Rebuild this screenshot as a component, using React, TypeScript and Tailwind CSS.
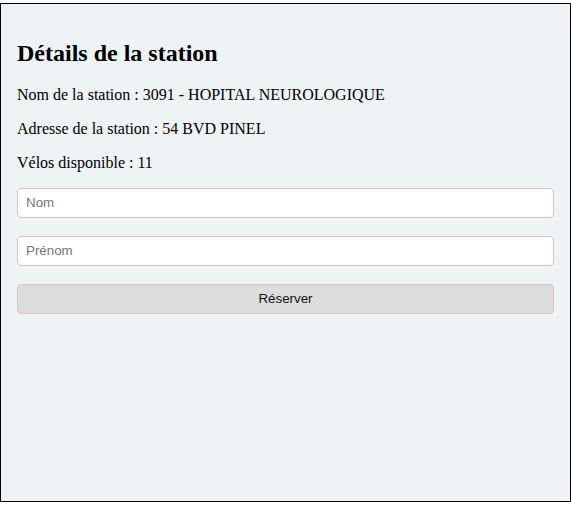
export default function App() {
  return (
    <div className="pt-[3px] bg-white">
      <div
        className="h-[499px] border border-black bg-[#eff3f4] px-4 pt-[36px]"
        style={{ fontFamily: '"Liberation Serif", "Times New Roman", serif' }}
      >
        <h2 className="text-[24px] font-bold leading-[27.6px] text-black mb-[18px]">
          Détails de la station
        </h2>
        <p className="text-[16px] leading-[18.4px] text-black mb-4">
          Nom de la station : 3091 - HOPITAL NEUROLOGIQUE
        </p>
        <p className="text-[16px] leading-[18.4px] text-black mb-4">
          Adresse de la station : 54 BVD PINEL
        </p>
        <p className="text-[16px] leading-[18.4px] text-black mb-[15px]">
          Vélos disponible : 11
        </p>
        <form
          className="flex flex-col gap-[18px]"
          style={{ fontFamily: '"Liberation Sans", Arial, sans-serif' }}
          onSubmit={(e) => e.preventDefault()}
        >
          <input
            type="text"
            placeholder="Nom"
            className="h-[30px] w-full rounded-[4px] border border-[#d8c6c6] bg-white px-2 text-[13.33px] text-black placeholder:text-[#767676] outline-none"
          />
          <input
            type="text"
            placeholder="Prénom"
            className="h-[30px] w-full rounded-[4px] border border-[#d8c6c6] bg-white px-2 text-[13.33px] text-black placeholder:text-[#767676] outline-none"
          />
          <button
            type="submit"
            className="h-[30px] w-full rounded-[4px] border border-[#d8c6c6] bg-[#dddddd] text-[13.33px] text-[#111]"
          >
            Réserver
          </button>
        </form>
      </div>
    </div>
  );
}
